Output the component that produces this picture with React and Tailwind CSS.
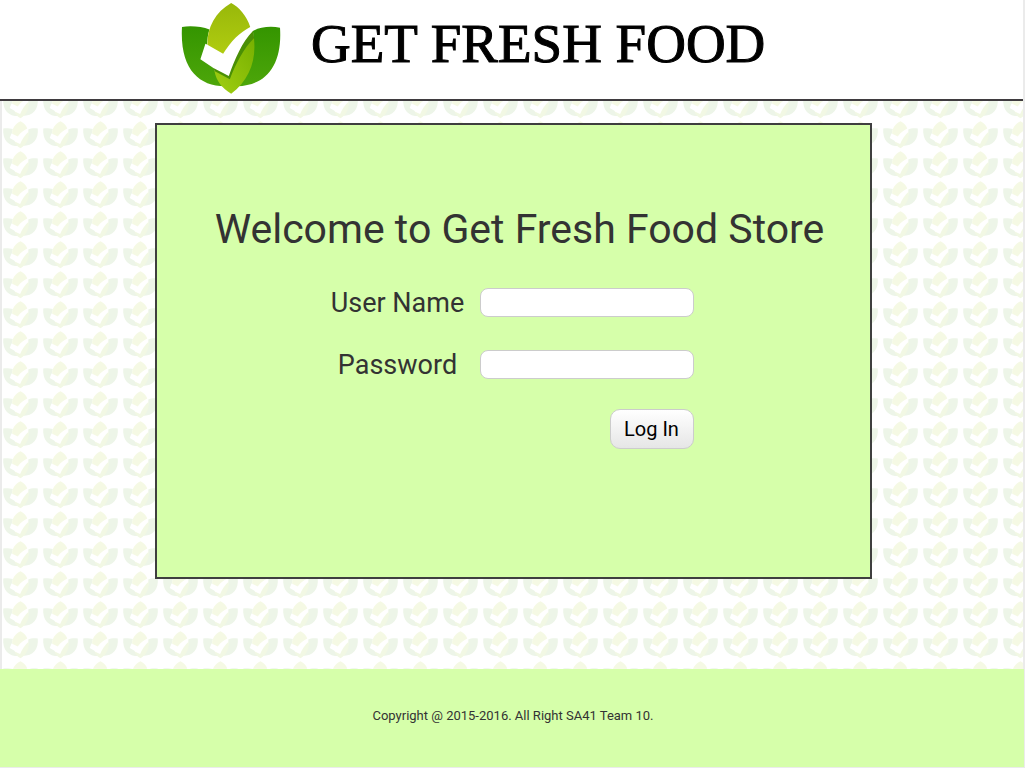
import React from "react";

const LEFT_LEAF =
  "M35 80 C60 75 95 79 117 87 C111 105 111 120 110 132 L105 130 L90 176 L130 203 C137 225 152 243 168 257 C85 259 28 205 35 80 Z";
const RIGHT_LEAF =
  "M328 82 C300 76 265 80 247 92 C252 130 240 200 200 257 C290 254 335 190 328 82 Z";
const TOP_LEAF =
  "M182 8 C205 20 228 45 239 80 C208 96 182 122 158 160 L111 133 C110 80 135 35 182 8 Z";
const CHECK_SHADE =
  "M129 202 L175 226 C192 178 216 122 247 92 L252 120 L182 245 L134 216 Z";
const BOTTOM_LEAF =
  "M132 211 L178 236 C195 190 220 142 250 113 C258 180 235 240 182 279 C155 262 138 242 132 211 Z";

function LogoMark() {
  return (
    <svg viewBox="33 8 297 272" className="h-[91px] w-[100px]" aria-hidden="true">
      <defs>
        <linearGradient id="side" x1="0" y1="0" x2="0" y2="1">
          <stop offset="0" stopColor="#349500" />
          <stop offset="1" stopColor="#4da60a" />
        </linearGradient>
        <linearGradient id="top" x1="0" y1="0" x2="0" y2="1">
          <stop offset="0" stopColor="#98b80a" />
          <stop offset="1" stopColor="#b0cc10" />
        </linearGradient>
        <linearGradient id="bottom" x1="1" y1="0" x2="0" y2="1">
          <stop offset="0" stopColor="#76b000" />
          <stop offset="1" stopColor="#a2cf12" />
        </linearGradient>
      </defs>
      <path d={LEFT_LEAF} fill="url(#side)" />
      <path d={RIGHT_LEAF} fill="url(#side)" />
      <path d={TOP_LEAF} fill="url(#top)" />
      <path d={CHECK_SHADE} fill="#4a8f05" />
      <path d={BOTTOM_LEAF} fill="url(#bottom)" />
    </svg>
  );
}

function LeafPattern() {
  return (
    <div className="absolute inset-x-0.5 inset-y-0 bg-white">
      <svg className="h-full w-full" aria-hidden="true">
        <defs>
          <pattern id="leaves" x="-2" y="-11" width="40" height="30" patternUnits="userSpaceOnUse">
            <g transform="translate(-0.9 0.4) scale(0.118 0.1)">
              <path d={LEFT_LEAF} fill="#edf5e8" />
              <path d={RIGHT_LEAF} fill="#edf5e8" />
              <path d={TOP_LEAF} fill="#f5f9e4" />
              <path d={BOTTOM_LEAF} fill="#f2f8e4" />
            </g>
          </pattern>
        </defs>
        <rect width="100%" height="100%" fill="url(#leaves)" />
      </svg>
    </div>
  );
}

function Field({ id, label, type }) {
  return (
    <>
      <label htmlFor={id} className="pt-0.5 text-center text-[27px] leading-[27px]">
        {label}
      </label>
      <input
        id={id}
        name={id}
        type={type}
        className="h-[29px] w-full rounded-lg border border-[#ccc] bg-white px-2 text-base"
      />
    </>
  );
}

export default function App() {
  return (
    <div className="flex min-h-screen flex-col bg-[#ebebeb] pb-px font-['Roboto',sans-serif] text-[#333]">
      <header className="mr-0.5 flex h-[101px] items-start border-b-2 border-[#3f3b3f] bg-white pt-[3px] pl-[181px]">
        <LogoMark />
        <span className="ml-[30px] pt-[10px] font-['Liberation_Serif',serif] text-[55px] leading-[62px] whitespace-nowrap text-black [-webkit-text-stroke:1px_black]">
          GET FRESH FOOD
        </span>
      </header>

      <main className="relative flex-1 bg-[#ebebeb] pt-[22px] pb-[90px] pl-0.5">
        <LeafPattern />
        <section className="relative mx-auto min-h-[456px] w-[70%] border-2 border-[#3f3f3f] bg-[#d6ffaa] pt-[78px]">
          <h1 className="pl-3 text-center text-[41px] leading-[52px]">
            Welcome to Get Fresh Food Store
          </h1>
          <form
            className="mx-auto mt-[33px] grid w-[396px] grid-cols-[164px_214px] items-center gap-y-[33px] pr-[18px]"
            onSubmit={(event) => event.preventDefault()}
          >
            <Field id="username" label="User Name" type="text" />
            <Field id="password" label="Password" type="password" />
            <button
              type="submit"
              className="col-start-2 -mt-[3px] h-10 w-[84px] justify-self-end rounded-[10px] border border-[#ccc] bg-linear-to-b from-white to-[#e6e6e6] text-xl text-black"
            >
              Log In
            </button>
          </form>
        </section>
      </main>

      <footer className="mr-px flex h-[98px] items-center justify-center bg-[#d6ffaa] pb-1 pl-0.5 text-[13px]">
        <p>Copyright @ 2015-2016. All Right SA41 Team 10.</p>
      </footer>
    </div>
  );
}
